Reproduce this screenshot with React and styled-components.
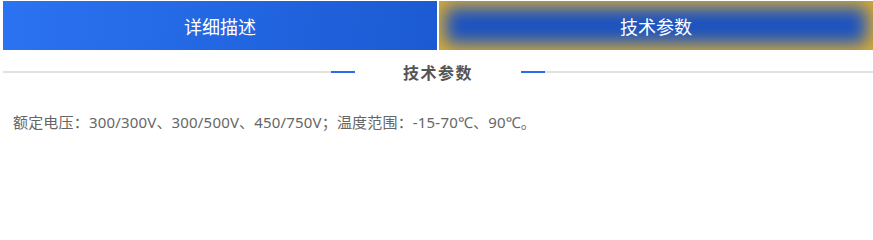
import React from "react";
import styled, { createGlobalStyle } from "styled-components";

const GlobalStyle = createGlobalStyle`
  html, body {
    margin: 0;
    padding: 0;
    background: #fff;
  }
  body {
    font-family: "Noto Sans CJK SC", "Noto Sans", sans-serif;
  }
`;

const Wrapper = styled.div`
  width: 873px;
  padding: 1px 0 0 3px;
  box-sizing: border-box;
`;

const Tabs = styled.div`
  display: flex;
  gap: 2px;
  height: 49px;
`;

const Tab = styled.div`
  flex: 1;
  display: flex;
  align-items: center;
  justify-content: center;
  color: #fff;
  font-size: 18px;
  cursor: pointer;
  background: ${(p) =>
    p.$active ? "#1a52c2" : "linear-gradient(100deg, #2b73f2 0%, #1b5ad2 100%)"};
  box-shadow: ${(p) => (p.$active ? "inset 0 0 18px 6px #deae30" : "none")};
`;

const Heading = styled.div`
  display: flex;
  align-items: center;
  height: 44px;
`;

const Rule = styled.span`
  flex: 1;
  height: 2px;
  background: #e1e1e1;
`;

const Dash = styled.span`
  width: 24px;
  height: 2px;
  background: #2a6fea;
`;

const HeadingText = styled.h3`
  margin: 0;
  padding: 0 48px;
  font-size: 16px;
  font-weight: 700;
  letter-spacing: 1.5px;
  color: #555;
  line-height: 1;
`;

const Content = styled.p`
  margin: 18px 0 0;
  padding-left: 10px;
  font-family: "Noto Sans", "Noto Sans CJK SC", sans-serif;
  font-size: 15px;
  letter-spacing: 0.18px;
  color: #666;
  line-height: 20px;
`;

const tabs = ["详细描述", "技术参数"];

const App = () => {
  const active = 1;
  return (
    <Wrapper>
      <GlobalStyle />
      <Tabs>
        {tabs.map((label, index) => (
          <Tab key={label} $active={index === active}>
            {label}
          </Tab>
        ))}
      </Tabs>
      <Heading>
        <Rule />
        <Dash />
        <HeadingText>技术参数</HeadingText>
        <Dash />
        <Rule />
      </Heading>
      <Content>
        额定电压：300/300V、300/500V、450/750V；温度范围：-15-70℃、90℃。
      </Content>
    </Wrapper>
  );
};

export default App;
